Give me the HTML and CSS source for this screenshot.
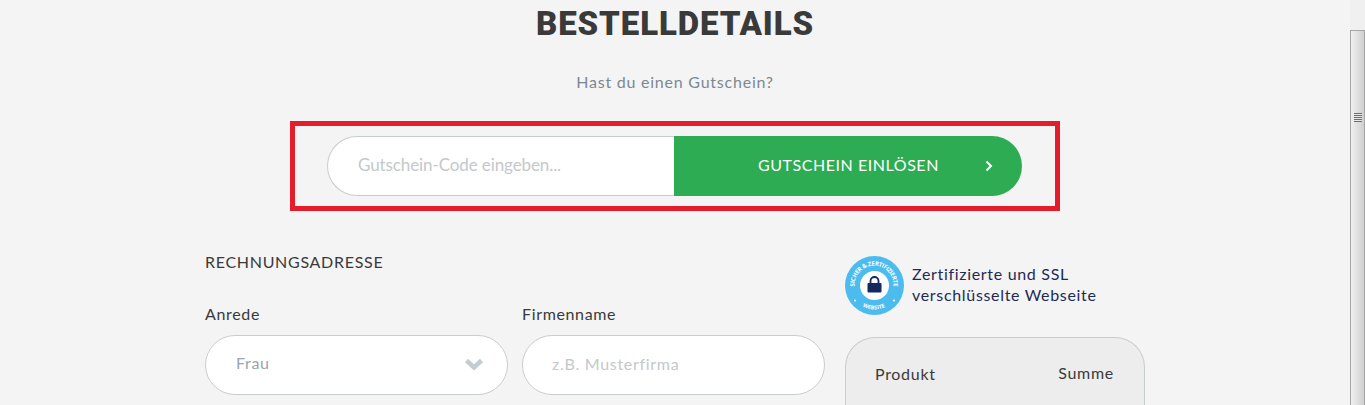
FILE: index.html
```html
<!DOCTYPE html>
<html lang="de">
<head>
  <meta charset="UTF-8">
  <meta name="viewport" content="width=device-width, initial-scale=1.0">
  <title>Bestelldetails</title>
  <link rel="stylesheet" href="styles.css">
</head>
<body>
  <main class="page">
    <h1 class="title">BESTELLDETAILS</h1>
    <p class="voucher-hint">Hast du einen Gutschein?</p>

    <div class="voucher-box">
      <div class="voucher-form">
        <input class="voucher-input" type="text" placeholder="Gutschein-Code eingeben...">
        <button class="voucher-btn" type="button">
          <span class="voucher-btn-label">GUTSCHEIN EINLÖSEN</span>
          <svg class="voucher-btn-icon" width="8" height="12" viewBox="0 0 8 12">
            <path d="M1.5 1.5 L6 6 L1.5 10.5" fill="none" stroke="#fff" stroke-width="2"/>
          </svg>
        </button>
      </div>
    </div>

    <div class="checkout">
      <section class="billing">
        <h2 class="section-title">RECHNUNGSADRESSE</h2>
        <div class="field-row">
          <div class="field">
            <label class="field-label" for="anrede">Anrede</label>
            <div class="select-box" id="anrede">
              <span class="select-value">Frau</span>
              <svg class="select-arrow" width="20" height="13" viewBox="0 0 20 13">
                <path d="M2.5 2.5 L10 9.5 L17.5 2.5" fill="none" stroke="#c3ccd1" stroke-width="4.5"/>
              </svg>
            </div>
          </div>
          <div class="field">
            <label class="field-label" for="firma">Firmenname</label>
            <input class="text-input" id="firma" type="text" placeholder="z.B. Musterfirma">
          </div>
        </div>
      </section>

      <aside class="summary">
        <div class="trust">
          <svg class="trust-badge" width="60" height="60" viewBox="0 0 60 60">
            <defs>
              <path id="arcTop" d="M17.1 44.6 A19.5 19.5 0 1 1 40.9 44.6"/>
              <path id="arcBottom" d="M12 45.9 A24 24 0 0 0 46 46.9"/>
            </defs>
            <circle cx="29.5" cy="29.5" r="29.5" fill="#4cbcef"/>
            <circle cx="29.5" cy="29.5" r="14.5" fill="#fff"/>
            <text class="badge-text"><textPath href="#arcTop" startOffset="50%" text-anchor="middle">SICHER &amp; ZERTIFIZIERTE</textPath></text>
            <text class="badge-text badge-text-small"><textPath href="#arcBottom" startOffset="50%" text-anchor="middle">WEBSITE</textPath></text>
            <circle cx="10" cy="44.5" r="1" fill="#fff"/>
            <circle cx="49" cy="44.5" r="1" fill="#fff"/>
            <path d="M25.5 28 V25 A4 4 0 0 1 33.5 25 V28" fill="none" stroke="#14295e" stroke-width="1.8"/>
            <rect x="22.5" y="27" width="14" height="9.5" rx="1" fill="#14295e"/>
          </svg>
          <p class="trust-text">Zertifizierte und SSL<br>verschlüsselte Webseite</p>
        </div>
        <div class="order-card">
          <span>Produkt</span>
          <span class="order-sum">Summe</span>
        </div>
      </aside>
    </div>
  </main>

  <div class="scrollbar">
    <div class="scrollbar-thumb">
      <span class="scrollbar-grip"></span>
    </div>
  </div>
</body>
</html>
```

FILE: styles.css
```css
* {
  box-sizing: border-box;
}

html, body {
  height: 405px;
  overflow: hidden;
}

body {
  margin: 0;
  display: flex;
  background-color: #f4f4f4;
  color: #3a3a3a;
  font-family: Lato, 'Liberation Sans', sans-serif;
}

.page {
  flex: 1;
  min-width: 0;
  display: flex;
  flex-direction: column;
  align-items: center;
}

.page > * {
  flex-shrink: 0;
}

.title {
  margin: 6px 0 0;
  font-family: Roboto, 'Liberation Sans', sans-serif;
  font-size: 33px;
  line-height: 36px;
  font-weight: 900;
  letter-spacing: 0.9px;
  color: #3a3a3a;
}

.voucher-hint {
  margin: 29px 0 0;
  font-size: 16px;
  line-height: 22px;
  letter-spacing: 0.77px;
  color: #7a8893;
}

.voucher-box {
  width: 770px;
  height: 90px;
  margin-top: 28px;
  padding-left: 32px;
  display: flex;
  align-items: center;
  border: 5px solid #e31d2b;
}

.voucher-form {
  display: flex;
  height: 60px;
}

.voucher-input {
  width: 347px;
  height: 60px;
  padding: 0 30px 4px;
  border: 1px solid #c8cdd0;
  border-right: none;
  border-radius: 30px 0 0 30px;
  background: #fff;
  font-family: inherit;
  font-size: 17px;
  letter-spacing: -0.1px;
  outline: none;
}

.voucher-input::placeholder, .text-input::placeholder {
  color: #c4c8cb;
  opacity: 1;
}

.voucher-btn {
  width: 348px;
  height: 60px;
  padding: 0 29px 0 84px;
  display: flex;
  align-items: center;
  justify-content: space-between;
  border: none;
  border-radius: 0 30px 30px 0;
  background-color: #2dac53;
  color: #fff;
  font-family: inherit;
  font-size: 16px;
}

.voucher-btn-label {
  margin-bottom: 4px;
  letter-spacing: 0.55px;
}

.checkout {
  width: 940px;
  margin-top: 33px;
  display: flex;
  gap: 20px;
}

.billing {
  width: 620px;
}

.section-title {
  margin: 7px 0 0;
  font-size: 16px;
  line-height: 22px;
  font-weight: 400;
  letter-spacing: 0.7px;
  color: #3a3a3a;
}

.field-row {
  display: flex;
  gap: 14px;
  margin-top: 30px;
}

.field {
  width: 303px;
}

.field-label {
  display: block;
  margin-bottom: 10px;
  font-size: 16px;
  line-height: 22px;
  letter-spacing: 0.65px;
}

.select-box, .text-input {
  width: 100%;
  height: 60px;
  border: 1px solid #c8cdd0;
  border-radius: 30px;
  background: #fff;
  font-family: inherit;
  font-size: 16px;
  letter-spacing: 0.7px;
}

.select-box {
  padding: 0 23px 0 30px;
  display: flex;
  align-items: center;
  justify-content: space-between;
  color: #9aa5ab;
}

.select-value {
  margin-bottom: 6px;
}

.select-arrow {
  margin-bottom: 2px;
}

.text-input {
  padding: 0 29px 4px;
  outline: none;
}

.summary {
  width: 300px;
  padding-top: 12px;
}

.trust {
  display: flex;
  align-items: center;
  gap: 7px;
}

.trust-badge {
  flex-shrink: 0;
}

.badge-text {
  font-family: 'Open Sans', sans-serif;
  font-size: 6px;
  font-weight: 700;
  letter-spacing: -0.3px;
  fill: #fff;
}

.badge-text-small {
  font-size: 5.5px;
  letter-spacing: 0;
}

.trust-text {
  margin: 0 0 4px;
  font-size: 16px;
  line-height: 21px;
  letter-spacing: 0.68px;
  color: #1f2a55;
}

/* cut off by the window, so no bottom edge */
.order-card {
  height: 68px;
  margin-top: 21px;
  padding: 25px 30px 0 29px;
  display: flex;
  justify-content: space-between;
  align-items: flex-start;
  border: 1px solid #c8cdd0;
  border-bottom: none;
  border-radius: 30px 30px 0 0;
  background-color: #ededed;
  font-size: 16px;
  line-height: 22px;
  letter-spacing: 0.7px;
}

.order-sum {
  margin-top: -1px;
}

.scrollbar {
  width: 15px;
  flex-shrink: 0;
  padding-top: 30px;
  background-color: #f0f0f0;
}

.scrollbar-thumb {
  height: 375px;
  padding-top: 82px;
  display: flex;
  justify-content: center;
  border: 1px solid #a6a6a6;
  border-bottom: none;
  background: linear-gradient(to right, #f0f0f0, #cfcfcf);
}

.scrollbar-grip {
  width: 8px;
  height: 9px;
  background: repeating-linear-gradient(to bottom, #6e6e6e 0, #6e6e6e 1px, #e8e8e8 1px, #e8e8e8 2px);
}
```
